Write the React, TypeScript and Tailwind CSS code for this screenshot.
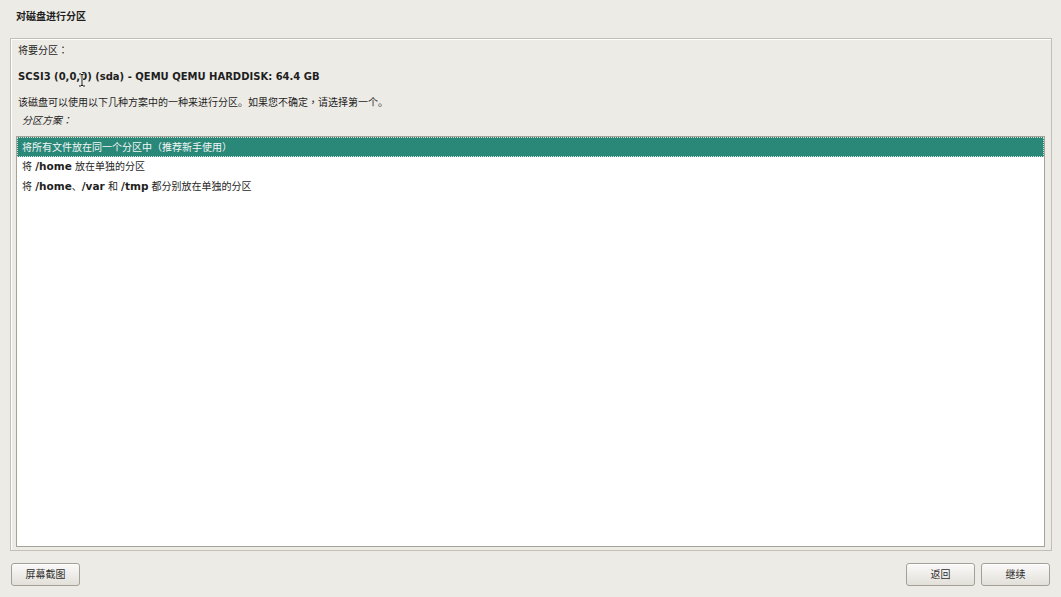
import React from "react";

const font = { fontFamily: '"DejaVu Sans", "Noto Sans CJK SC", sans-serif' };
const cjk = { fontFamily: '"Noto Sans CJK TC", sans-serif' };

function GtkButton({ label }: { label: string }) {
  return (
    <button
      className="flex h-[23px] w-[69px] items-center justify-center rounded-[3px] border border-[#a3a097] bg-gradient-to-b from-[#fbfaf9] to-[#e3e0da] text-[10px] text-[#2e2e2e] shadow-[inset_0_1px_0_#ffffff]"
    >
      {label}
    </button>
  );
}

function IBeam() {
  return (
    <svg
      className="pointer-events-none absolute left-[78px] top-[73px]"
      width="8"
      height="14"
      viewBox="0 0 8 14"
    >
      <path d="M1 1h2l1 1 1-1h2M4 2v10M1 13h2l1-1 1 1h2" fill="none" stroke="#ffffff" strokeWidth="2.2" />
      <path d="M1 1h2l1 1 1-1h2M4 2v10M1 13h2l1-1 1 1h2" fill="none" stroke="#111111" strokeWidth="1" />
    </svg>
  );
}

const options = [
  { key: "all", node: <span>将所有文件放在同一个分区中（推荐新手使用）</span> },
  {
    key: "home",
    node: (
      <span>
        将 <b className="text-[10.5px]">/home</b> 放在单独的分区
      </span>
    ),
  },
  {
    key: "multi",
    node: (
      <span>
        将 <b className="text-[10.5px]">/home</b>、<b className="text-[10.5px]">/var</b> 和{" "}
        <b className="text-[10.5px]">/tmp</b> 都分别放在单独的分区
      </span>
    ),
  },
];

export default function App() {
  return (
    <div
      style={font}
      className="relative flex h-[597px] w-[1061px] flex-col overflow-hidden bg-[#edebe6] text-[#1e1e1e]"
    >
      <div className="flex h-[38px] items-start pl-[16px] pt-[9px] text-[10px] font-bold">
        对磁盘进行分区
      </div>

      <div className="ml-[10px] mr-[9px] flex h-[513px] flex-col border border-[#c3bfb7] pb-[3px] pl-[5px] pr-[6px] pt-[4px] shadow-[inset_1px_1px_0_#ffffff]">
        <div className="flex h-[14px] items-center pl-[2px] text-[10px]">
          <span>
            将要分区<span style={cjk}>：</span>
          </span>
        </div>
        <div className="mt-[11px] flex h-[16px] items-center pl-[2px] text-[10px] font-bold">
          SCSI3 (0,0,0) (sda) - QEMU QEMU HARDDISK: 64.4 GB
        </div>
        <div className="mt-[11px] flex h-[14px] items-center pl-[2px] text-[10px]">
          <span>
            该磁盘可以使用以下几种方案中的一种来进行分区。如果您不确定<span style={cjk}>，</span>请选择第一个。
          </span>
        </div>
        <div className="mt-[4px] flex h-[14px] items-center pl-[6px] text-[10px] italic">
          <span>
            分区方案<span style={cjk}>：</span>
          </span>
        </div>

        <div className="mt-[9px] flex flex-1 flex-col border border-[#a6a298] bg-white">
          {options.map((o, i) => (
            <div
              key={o.key}
              className={
                i === 0
                  ? "flex h-[20px] items-center border border-dotted border-[#cfe3de] bg-[#2a8879] pl-[4px] text-[10px] text-[#f2f7f5]"
                  : "flex h-[20px] items-center pl-[5px] text-[10px] text-[#1e1e1e]"
              }
            >
              {o.node}
            </div>
          ))}
        </div>
      </div>

      <div className="flex flex-1 items-center justify-between pl-[11px] pr-[11px] pt-[1px]">
        <GtkButton label="屏幕截图" />
        <div className="flex gap-[6px]">
          <GtkButton label="返回" />
          <GtkButton label="继续" />
        </div>
      </div>

      <IBeam />
    </div>
  );
}
